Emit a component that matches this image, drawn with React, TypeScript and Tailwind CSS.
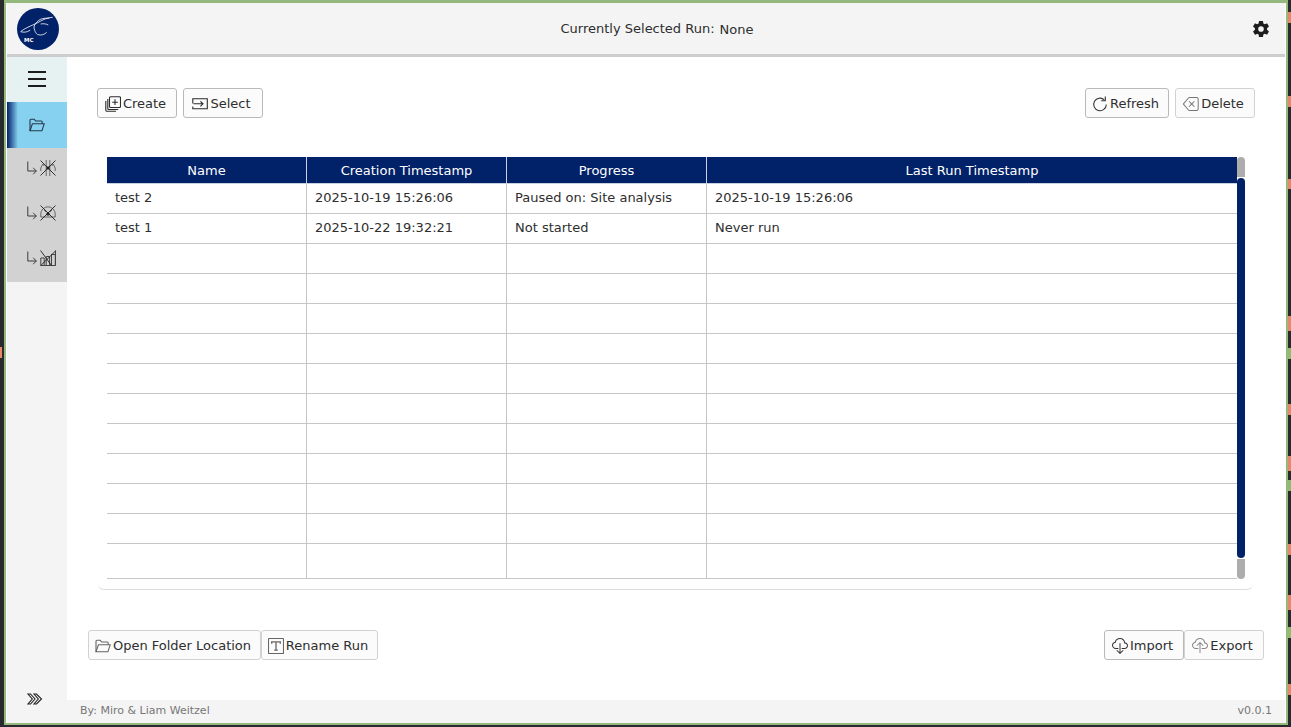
import { BsBackspace, BsCloudDownload, BsCloudUpload } from "react-icons/bs";
import { IoSettingsSharp } from "react-icons/io5";
import type { ReactNode } from "react";

const runs = [
    ["test 2", "2025-10-19 15:26:06", "Paused on: Site analysis", "2025-10-19 15:26:06"],
    ["test 1", "2025-10-22 19:32:21", "Not started", "Never run"],
];
const headers = ["Name", "Creation Timestamp", "Progress", "Last Run Timestamp"];
const rows = Array.from({ length: 13 }, (_, i) => runs[i] || ["", "", "", ""]);

// slivers of the terminal text showing behind the window
const peeks = [
    { y: 12, h: 11, c: "bg-[#e8876a]" },
    { y: 96, h: 11, c: "bg-[#e8876a]" },
    { y: 179, h: 10, c: "bg-[#e8876a]" },
    { y: 316, h: 15, c: "bg-[#e8876a]" },
    { y: 348, h: 11, c: "bg-[#8fbc6f]" },
    { y: 404, h: 11, c: "bg-[#e8876a]" },
    { y: 456, h: 15, c: "bg-[#e8876a]" },
    { y: 480, h: 11, c: "bg-[#8fbc6f]" },
    { y: 544, h: 11, c: "bg-[#e8876a]" },
    { y: 595, h: 15, c: "bg-[#e8876a]" },
    { y: 627, h: 11, c: "bg-[#8fbc6f]" },
    { y: 684, h: 11, c: "bg-[#e8876a]" },
];

const CreateIcon = () => (
    <svg viewBox="0 0 16 16" className="h-4 w-4" fill="none" stroke="#2b2b2b" strokeWidth="1.1">
        <rect x="4.500" y="0.800" width="11" height="10.700" rx="1" />
        <path d="M10 3.300v5.700M7.200 6.200h5.600" />
        <path d="M2.800 3v9.500a1 1 0 0 0 1 1h9.500" />
        <path d="M0.800 5v9a1.300 1.300 0 0 0 1.300 1.300H11" />
    </svg>
);

const SelectIcon = () => (
    <svg viewBox="0 0 16 16" className="h-4 w-4" fill="none" stroke="#2b2b2b" strokeWidth="1.1">
        <path d="M0.800 7.500V2.800h14.500v10H0.800V10.500" />
        <path d="M1.500 7.800h9.500M8.400 5.300 11 7.800l-2.600 2.500" />
    </svg>
);

const RefreshIcon = () => (
    <svg viewBox="0 0 16 16" className="h-4 w-4" fill="none" stroke="#333" strokeWidth="1.100">
        <path d="M14.300 8.500A6.300 6.300 0 1 1 12.300 3.800" />
        <path d="M13.300 0.500v4.300H9.200" />
    </svg>
);

const FolderOpenIcon = ({ color }: { color: string }) => (
    <svg viewBox="0 0 16 14" className="h-[14px] w-4" fill="none" stroke={color} strokeWidth="1.100">
        <path d="M1 12.800V2.300a1 1 0 0 1 1-1h3.200l1.500 1.700h5.500a1 1 0 0 1 1 1v1.800" />
        <path d="M1 12.800 3.400 5.800h11.800l-2.300 7z" />
    </svg>
);

const RenameIcon = () => (
    <svg viewBox="0 0 16 16" className="h-4 w-4" fill="none" stroke="#666" strokeWidth="1.100">
        <rect x="0.500" y="0.500" width="15" height="15" rx="0.500" />
        <path d="M3.700 5.800V3.800h8.600v2M8 3.800v8.400M6.200 12.200h3.600" strokeWidth="1.300" />
    </svg>
);

const Logo = () => (
    <svg viewBox="0 0 42 42" className="h-[42px] w-[42px]">
        <circle cx="21" cy="21" r="21" fill="#012169" />
        <path d="M3.700 23.700C7 20.500 14 18 21 14.500 26 11.500 31 9.500 35.700 9.300" fill="none" stroke="#fff" strokeWidth="0.800" />
        <path d="M3.700 23.700c3 .8 6 .8 9.500-1.500" fill="none" stroke="#fff" strokeWidth="0.800" />
        <path d="M32.300 10.300c-5-.5-9 .4-11 2.400-3.300 2.800-5 5.800-4 8.300 .8 3.500 3 6 4 5.700 3 .8 6 0 8.400-2.400" fill="none" stroke="#fff" strokeWidth="0.800" />
        <path d="M23.700 16c2.500-.5 5-.3 7.600 1" fill="none" stroke="#fff" strokeWidth="0.800" />
        <text x="7" y="33.700" fill="#fff" fontSize="5.500" fontWeight="700" fontFamily="'DejaVu Sans', sans-serif">MC</text>
    </svg>
);

const SubArrow = () => (
    <svg viewBox="0 0 10 14" className="h-[14px] w-[10px]" fill="none" stroke="#2b2b2b" strokeWidth="0.900">
        <path d="M0.800 0.500v9.500h8.500M6.200 6.800 9.300 10l-3.100 3.200" />
    </svg>
);

const Cross = () => <path d="M0.500 0.500l15 15M15.500 0.500l-15 15" stroke="#1f1f1f" strokeWidth="0.900" fill="none" />;

const SiteIcon = () => (
    <svg viewBox="0 0 16 16" className="h-4 w-4" fill="none" stroke="#666" strokeWidth="1">
        <path d="M6.200 0v16M9.800 0v16M0.800 8l2-4 1.500 2M15.200 8l-2-4-1.500 2M0.800 8v3M15.200 8v3" />
        <circle cx="8" cy="8" r="1.800" fill="#333" stroke="none" />
        <Cross />
    </svg>
);

const GaugeIcon = () => (
    <svg viewBox="0 0 16 16" className="h-4 w-4" fill="none" stroke="#666" strokeWidth="1">
        <path d="M0.800 12V9a7.200 7.200 0 0 1 14.400 0v3zM4 5l2 2M12 5l-2 2" />
        <circle cx="8" cy="9" r="1.800" fill="#333" stroke="none" />
        <Cross />
    </svg>
);

const BarsIcon = () => (
    <svg viewBox="0 0 16 16" className="h-4 w-4" fill="none" stroke="#444" strokeWidth="1">
        <path d="M0.800 15.500V8h3.400v7.500M6.200 15.500V6.500h3.400v9M11.500 15.500V4.500h3.800v11M0.500 15.500h15" />
        <path d="M15.500 0.500v15" />
        <path d="M0.500 0.500l11 15M0.800 15.500 15.500 1" stroke="#1f1f1f" strokeWidth="0.900" />
    </svg>
);

const Chevrons = () => (
    <svg viewBox="0 0 16 12" className="h-3 w-4" fill="none" stroke="#222" strokeWidth="1.100">
        <path d="M1 1h2.500L8 6l-4.500 5H1l4.300-5z" />
        <path d="M7 1h2.500L14.500 6l-5 5H7l4.300-5z" />
    </svg>
);

const Btn = ({ icon, label, w, strong }: { icon: ReactNode; label: string; w: string; strong?: boolean }) => (
    <button
        className={`flex h-[30px] items-center justify-center gap-[2px] rounded-[3px] border bg-[#fbfbfb] pr-[3px] pt-[2px] text-[13px] text-[#2e2e2e] ${w} ${strong ? "border-[#b9b9b9]" : "border-[#d2d2d2]"}`}
    >
        {icon}
        <span>{label}</span>
    </button>
);

const NavItem = ({ children }: { children: ReactNode }) => (
    <div className="flex h-[45px] items-center justify-center gap-[3px] pb-[5px] pl-[8px]">{children}</div>
);

export default function App() {
    return (
        <div className="relative h-[727px] w-[1291px] overflow-hidden bg-[#282a2e] font-['DejaVu_Sans',sans-serif]">
            {peeks.map((p, i) => (
                <div key={i} className={`absolute left-[1288px] w-[3px] ${p.c}`} style={{ top: p.y, height: p.h }} />
            ))}
            <div className="absolute left-0 top-[347px] h-[11px] w-[2px] bg-[#e8876a]" />

            <div className="absolute left-[4px] top-0 flex h-[725px] w-[1284px] flex-col border-2 border-t-[3px] border-[#95b97d] bg-white px-px">
                <header className="flex h-[54px] shrink-0 items-center justify-between border-b-[3px] border-[#cdcdcd] bg-[#f4f4f4] pl-[10px] pr-[15px]">
                    <Logo />
                    <div className="ml-[3px] flex items-center gap-[5px] text-[13px] text-[#2e2e2e]">
                        <span>Currently Selected Run:</span>
                        <span className="mt-[2px]">None</span>
                    </div>
                    <IoSettingsSharp className="h-[18px] w-[18px] text-[#1d1d1d]" />
                </header>

                <div className="flex min-h-0 flex-1">
                    <aside className="flex w-[60px] shrink-0 flex-col bg-[#f4f4f4]">
                        <div className="flex h-[45px] items-center justify-center bg-[#e6f2f2]">
                            <div className="flex w-[19px] flex-col gap-[5px] pb-[2px] pr-px">
                                <div className="h-[2px] bg-[#1d1d1d]" />
                                <div className="h-[2px] bg-[#1d1d1d]" />
                                <div className="h-[2px] bg-[#1d1d1d]" />
                            </div>
                        </div>
                        <div className="flex h-[46px] items-center justify-center bg-[linear-gradient(90deg,#012169_0px,#86d1ef_11px)] pr-[1px]">
                            <FolderOpenIcon color="#22384a" />
                        </div>
                        <div className="h-[134px] overflow-hidden bg-[#d2d2d2]">
                            <NavItem><SubArrow /><SiteIcon /></NavItem>
                            <NavItem><SubArrow /><GaugeIcon /></NavItem>
                            <NavItem><SubArrow /><BarsIcon /></NavItem>
                        </div>
                        <div className="mt-auto flex justify-center pb-[18px] pr-[5px]">
                            <Chevrons />
                        </div>
                    </aside>

                    <div className="flex min-w-0 flex-1 flex-col">
                        <main className="flex flex-1 flex-col bg-white pt-[31px]">
                            <div className="flex justify-between px-[30px]">
                                <div className="flex gap-[6px]">
                                    <Btn icon={<CreateIcon />} label="Create" w="w-[80px]" strong />
                                    <Btn icon={<SelectIcon />} label="Select" w="w-[80px]" strong />
                                </div>
                                <div className="flex gap-[6px]">
                                    <Btn icon={<RefreshIcon />} label="Refresh" w="w-[84px]" strong />
                                    <Btn icon={<BsBackspace className="h-4 w-4 text-[#777]" />} label="Delete" w="w-[80px]" />
                                </div>
                            </div>

                            <div className="ml-[31px] mt-[39px] h-[433px] w-[1155px] rounded-b-[6px] border-b border-[#dcdcdc] pl-[9px]">
                                <div className="flex h-[422px]">
                                    <div className="w-[1130px] text-[13px] text-[#2e2e2e]">
                                        <div className="grid h-[27px] grid-cols-[200px_200px_200px_1fr] border-b border-[#c9d0e0] bg-[#012169] text-white">
                                            {headers.map((h, i) => (
                                                <div key={h} className={`flex items-center justify-center pt-[2px] ${i < 3 ? "border-r border-[#c9d0e0]" : ""}`}>
                                                    {h}
                                                </div>
                                            ))}
                                        </div>
                                        {rows.map((row, r) => (
                                            <div
                                                key={r}
                                                className={`grid grid-cols-[200px_200px_200px_1fr] border-b border-[#c6c6c6] ${r === 12 ? "h-[35px]" : "h-[30px]"}`}
                                            >
                                                {row.map((cell, i) => (
                                                    <div key={i} className={`flex items-center pb-[2px] pl-2 ${i < 3 ? "border-r border-[#c6c6c6]" : ""}`}>
                                                        {cell}
                                                    </div>
                                                ))}
                                            </div>
                                        ))}
                                    </div>
                                    <div className="flex w-2 flex-col gap-px">
                                        <div className="h-5 rounded-t-[4px] bg-[#adadad]" />
                                        <div className="h-[380px] rounded-[4px] bg-[#012169]" />
                                        <div className="h-5 rounded-b-[4px] bg-[#adadad]" />
                                    </div>
                                </div>
                            </div>

                            <div className="mt-[40px] flex justify-between px-[21px]">
                                <div className="flex">
                                    <Btn icon={<FolderOpenIcon color="#666" />} label="Open Folder Location" w="w-[173px]" />
                                    <Btn icon={<RenameIcon />} label="Rename Run" w="w-[117px]" />
                                </div>
                                <div className="flex">
                                    <Btn icon={<BsCloudDownload className="h-4 w-4 text-[#333]" />} label="Import" w="w-[80px]" strong />
                                    <Btn icon={<BsCloudUpload className="h-4 w-4 text-[#888]" />} label="Export" w="w-[80px]" />
                                </div>
                            </div>
                        </main>
                        <footer className="flex h-[23px] shrink-0 items-center justify-between bg-[#f4f4f4] px-[13px] pb-[1px] text-[11px] text-[#777]">
                            <span>By: Miro &amp; Liam Weitzel</span>
                            <span>v0.0.1</span>
                        </footer>
                    </div>
                </div>
            </div>
        </div>
    );
}
